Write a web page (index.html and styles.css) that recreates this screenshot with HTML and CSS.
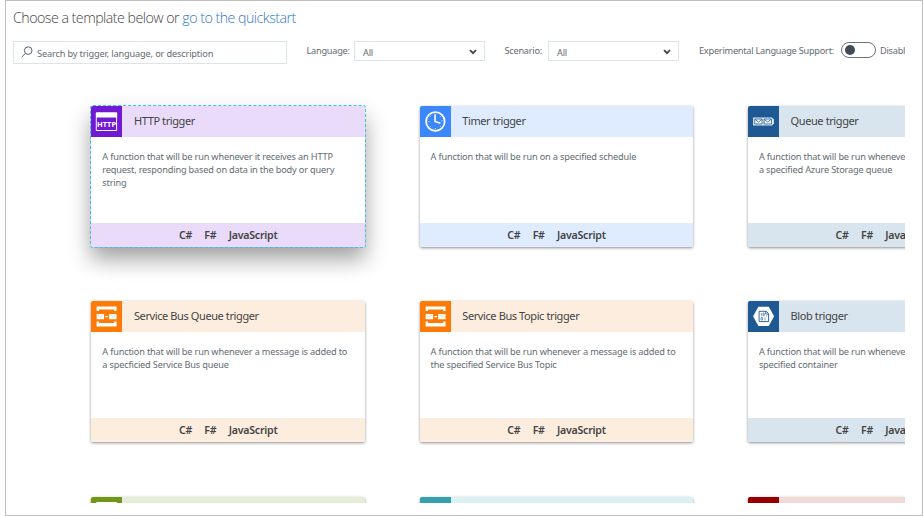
FILE: index.html
```html
<!DOCTYPE html>
<html lang="en">
<head>
<meta charset="utf-8">
<title>Choose a template</title>
<link rel="stylesheet" href="styles.css">
</head>
<body>
<svg class="defs" width="0" height="0">
  <symbol id="chevron" viewBox="0 0 8 6"><path d="M1 1.2L4 4.2L7 1.2" fill="none" stroke="#444" stroke-width="1.8"/></symbol>
  <symbol id="bus" viewBox="0 0 31 31">
    <path d="M5.5 5.5h20v4.5h-2.4v-1.5h-15.2v1.5h-2.4zM5.5 25.5h20v-5h-2.4v1.5h-15.2v-1.5h-2.4z" fill="#fff"/>
    <path d="M5.5 13h7.5v5.3H5.5zM18 13h7.5v5.3H18zM14.2 15h2.7v1.2h-2.7z" fill="#fff"/>
    <path d="M6.2 13.7l3 2.4l3-2.4M18.8 13.7l3 2.4l3-2.4" fill="none" stroke="#fcc08e" stroke-width=".7"/>
  </symbol>
</svg>
<main class="frame">
  <div class="viewport">
    <h1 class="heading">Choose a template below or <a class="link">go to the quickstart</a></h1>
    <div class="toolbar">
      <div class="search">
        <svg class="search-icon" width="12" height="12" viewBox="0 0 12 12" fill="none" stroke="#59626b"><circle cx="7.2" cy="4.6" r="3.8"/><path d="M4.5 7.3L.7 11.1"/></svg>
        <span class="search-text">Search by trigger, language, or description</span>
      </div>
      <span class="label label-language">Language:</span>
      <div class="select"><span>All</span><svg width="8" height="6"><use href="#chevron"/></svg></div>
      <span class="label label-scenario">Scenario:</span>
      <div class="select"><span>All</span><svg width="8" height="6"><use href="#chevron"/></svg></div>
      <span class="label label-support">Experimental Language Support:</span>
      <div class="toggle"><i class="knob"></i></div>
      <span class="toggle-text">Disabled</span>
    </div>
    <section class="cards">
      <article class="card purple selected">
        <header class="card-head">
          <svg class="icon" viewBox="0 0 31 31"><path d="M5.2 7h20.3v17.5H5.2z" fill="none" stroke="#fff" stroke-width="1"/><path d="M5 6.5h21v5H5z" fill="#fff"/><text x="15.5" y="20.9" text-anchor="middle" textLength="19" lengthAdjust="spacingAndGlyphs" class="http">HTTP</text></svg>
          <h2>HTTP trigger</h2>
        </header>
        <p class="desc">A function that will be run whenever it receives an HTTP<br>request, responding based on data in the body or query<br>string</p>
        <footer class="langs"><span>C#</span><span>F#</span><span>JavaScript</span></footer>
      </article>
      <article class="card blue">
        <header class="card-head">
          <svg class="icon" viewBox="0 0 31 31" fill="none" stroke="#fff"><circle cx="15.3" cy="15.5" r="9.3" stroke-width="1.7"/><path d="M15 8.2v7.3l5.3 1.7" stroke-width="1.6"/><path d="M8 15.5h1.2M15.3 22v1.2M21.5 14.8h1M10 10.2l.7.7M10 20.8l.7-.7M20.6 20.8l-.7-.7M20.6 10.2l-.7.7" stroke-width=".8"/></svg>
          <h2>Timer trigger</h2>
        </header>
        <p class="desc">A function that will be run on a specified schedule</p>
        <footer class="langs"><span>C#</span><span>F#</span><span>JavaScript</span></footer>
      </article>
      <article class="card navy">
        <header class="card-head">
          <svg class="icon" viewBox="0 0 31 31"><path d="M5 11.5h18.8l2 2v4l-2 2H5z" fill="#e5edf4"/><path d="M6.7 13h7.3v5H6.7zM16 13h7.3v5H16z" fill="#fff" stroke="#2c649b" stroke-width=".9"/><path d="M7 13.3l3.4 2.8l3.4-2.8M16.2 13.3l3.4 2.8l3.4-2.8" fill="none" stroke="#2c649b" stroke-width=".9"/></svg>
          <h2>Queue trigger</h2>
        </header>
        <p class="desc">A function that will be run whenever a message is added to<br>a specified Azure Storage queue</p>
        <footer class="langs"><span>C#</span><span>F#</span><span>JavaScript</span></footer>
      </article>
      <article class="card orange">
        <header class="card-head"><svg class="icon" viewBox="0 0 31 31"><use href="#bus"/></svg><h2>Service Bus Queue trigger</h2></header>
        <p class="desc">A function that will be run whenever a message is added to<br>a specficied Service Bus queue</p>
        <footer class="langs"><span>C#</span><span>F#</span><span>JavaScript</span></footer>
      </article>
      <article class="card orange">
        <header class="card-head"><svg class="icon" viewBox="0 0 31 31"><use href="#bus"/></svg><h2>Service Bus Topic trigger</h2></header>
        <p class="desc">A function that will be run whenever a message is added to<br>the specified Service Bus Topic</p>
        <footer class="langs"><span>C#</span><span>F#</span><span>JavaScript</span></footer>
      </article>
      <article class="card navy">
        <header class="card-head">
          <svg class="icon" viewBox="0 0 31 31"><path d="M10.3 5.7h10.4l5.3 9.6l-5.3 9.6H10.3L5 15.3z" fill="#fff"/><path d="M11 10.3h7.2l2.3 2.3v8H11zM17.7 10.3v2.8h2.8" fill="none" stroke="#20568e" stroke-width=".9"/><path d="M13.2 12v2.8M15 12h1v2.8h-1zM13 16.5h1.5v2.5h-1.5zM17 16.5v2.8M18 15h.8" fill="none" stroke="#20568e" stroke-width=".6"/></svg>
          <h2>Blob trigger</h2>
        </header>
        <p class="desc">A function that will be run whenever a blob is added to a<br>specified container</p>
        <footer class="langs"><span>C#</span><span>F#</span><span>JavaScript</span></footer>
      </article>
      <article class="card green"><header class="card-head"><svg class="icon" viewBox="0 0 31 31"><path d="M5.5 5.5h20v20h-20z" fill="none" stroke="#fff"/></svg></header></article>
      <article class="card teal"><header class="card-head"><svg class="icon" viewBox="0 0 31 31"></svg></header></article>
      <article class="card red"><header class="card-head"><svg class="icon" viewBox="0 0 31 31"></svg></header></article>
    </section>
  </div>
</main>
</body>
</html>
```
FILE: styles.css
```css
* { box-sizing: border-box; }
body { margin: 0; background: #fff; font-family: "Noto Sans", "Open Sans", sans-serif; font-size: 9.2px; color: #636b73; }
.defs { display: block; }
.frame { width: 918px; height: 516px; margin-left: 5px; border: 1px solid #bdbdbd; }
.viewport { width: 899px; height: 502px; padding-left: 7px; overflow: hidden; }
.heading { margin: 0; padding-top: 7px; height: 40px; font-family: "Open Sans", sans-serif; font-size: 14.2px; line-height: 20px; font-weight: 300; letter-spacing: -.5px; color: #444; white-space: nowrap; }
.link { color: #2f77c8; }
.toolbar { display: flex; align-items: flex-start; height: 65px; white-space: nowrap; line-height: 13px; letter-spacing: -.24px; }
.toolbar > * { flex: none; }
.search { display: flex; align-items: center; width: 274px; height: 23px; padding: 0 8px; border: 1px solid #dbe4e9; }
.search-icon { flex: none; margin: 0 4px 1px -1px; }
.search-text { padding-top: 2px; letter-spacing: -.15px; }
.label { padding-top: 3px; }
.label-language { width: 67px; padding-left: 19.5px; }
.label-scenario { width: 63px; padding-left: 19.5px; }
.label-support { width: 162px; padding-left: 20px; }
.select { display: flex; align-items: center; justify-content: space-between; width: 131px; height: 20px; padding: 2px 7px 0 8px; border: 1px solid #dbe4e9; }
.toggle { width: 35px; height: 16px; margin-top: 1px; padding: 2px 3px; border: 1px solid #6d7278; border-radius: 8px; }
.knob { display: block; width: 10px; height: 10px; border-radius: 50%; background: #424b58; }
.toggle-text { padding: 3px 0 0 4px; }
.cards { display: grid; grid-template-columns: repeat(3, 273.8px); grid-auto-rows: 141px; column-gap: 54.5px; row-gap: 54.3px; width: max-content; padding-left: 78.3px; }
.card { display: flex; flex-direction: column; border-radius: 2px; background: #fff; box-shadow: 0 1px 3px rgba(0, 0, 0, .45); }
.selected { outline: 1px dashed #3fbfee; box-shadow: 0 12px 22px rgba(0, 0, 0, .38); }
.card-head { display: flex; align-items: center; height: 31px; border-radius: 2px 2px 0 0; overflow: hidden; background: var(--tint); }
.icon { flex: none; width: 31.2px; height: 31px; background: var(--solid); }
.card h2 { margin: 0; padding: 0 0 1px 11.5px; font-size: 11px; line-height: 16px; font-weight: 400; letter-spacing: -.4px; color: #444; }
.desc { flex: 1; margin: 0; padding: 12.5px 0 0 11px; line-height: 13.3px; letter-spacing: -.17px; white-space: nowrap; }
.langs { display: flex; justify-content: center; gap: 12.3px; height: 24px; border-radius: 0 0 2px 2px; line-height: 24px; font-size: 10.6px; font-weight: 600; letter-spacing: -.24px; color: #444; background: var(--tint); }
.http { font: 700 7.4px "Open Sans", sans-serif; fill: #fff; }
.purple { --solid: #7219d4; --tint: #e9dbf9; }
.blue { --solid: #3c87fc; --tint: #dfecff; }
.navy { --solid: #1e5994; --tint: #d9e5ee; }
.orange { --solid: #fc7a05; --tint: #fdeddf; }
.green { --solid: #709717; --tint: #e4edd8; }
.teal { --solid: #359fab; --tint: #daf0f3; }
.red { --solid: #980000; --tint: #efd9d9; }
```
